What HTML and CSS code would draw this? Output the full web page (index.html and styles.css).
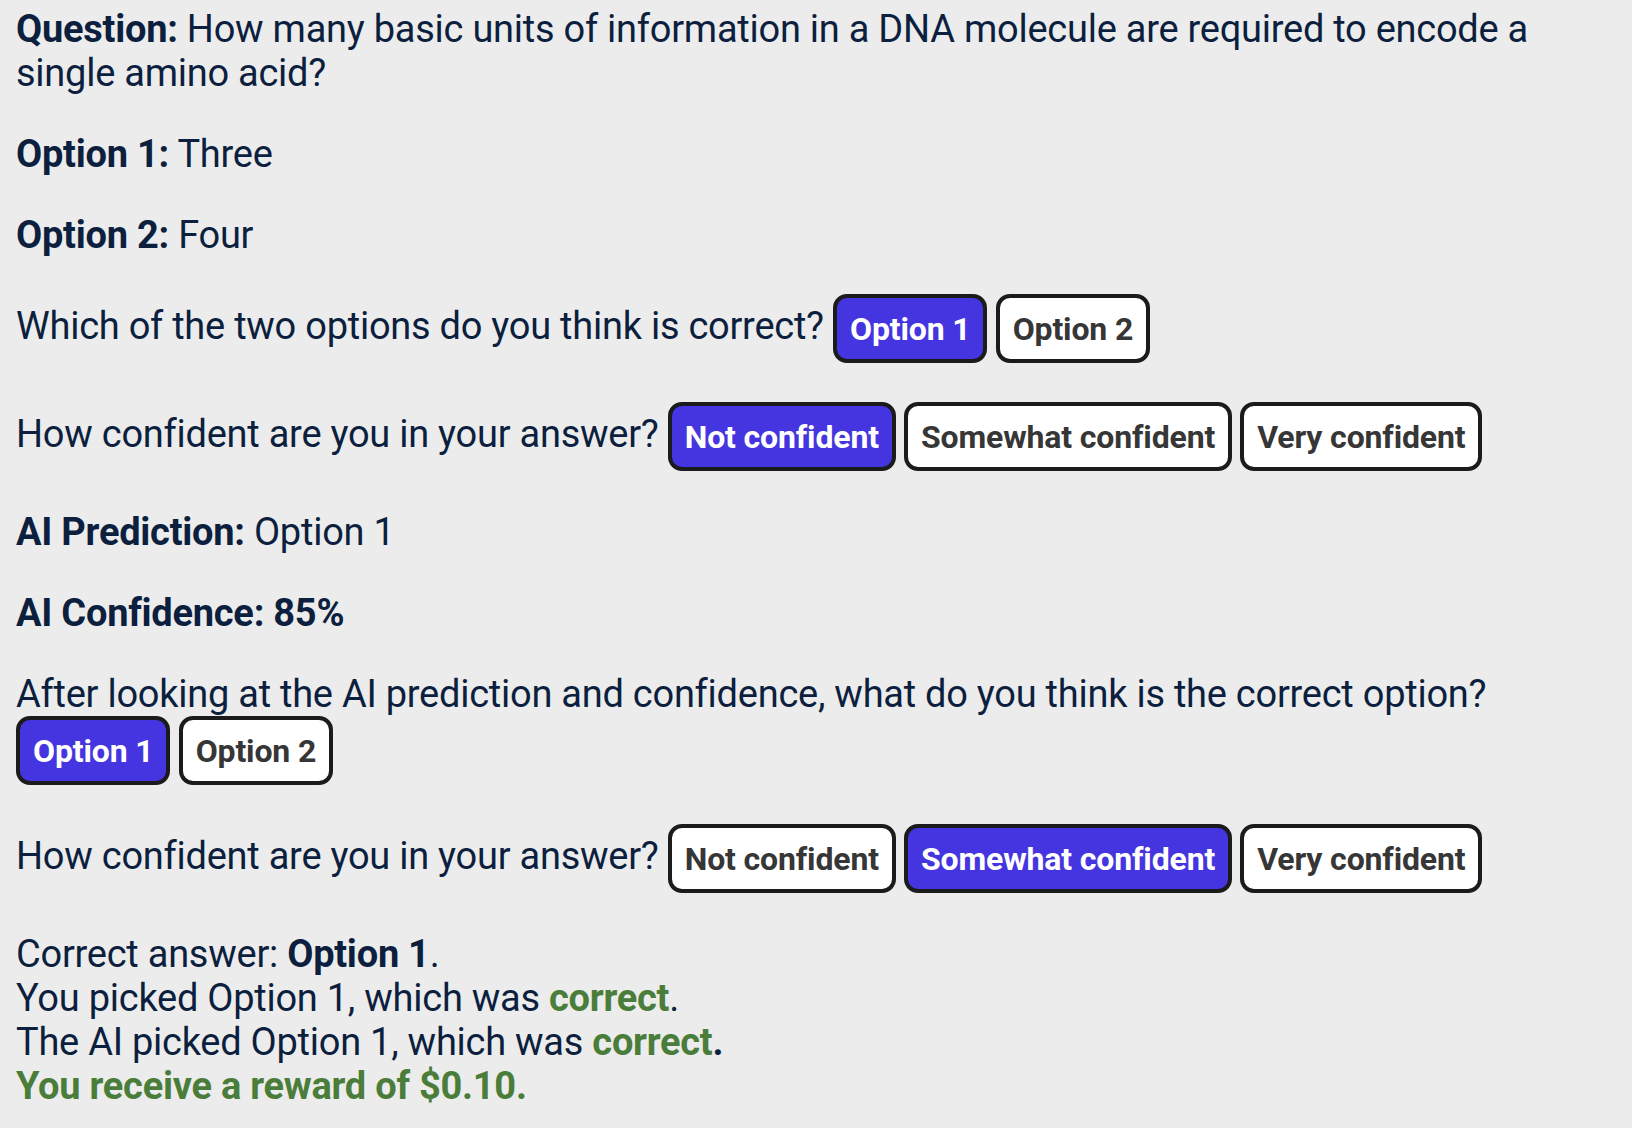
FILE: index.html
```html
<!DOCTYPE html>
<html>
<head>
<meta charset="utf-8">
<link rel="stylesheet" href="styles.css">
</head>
<body>
<div class="page">
  <p class="para"><b>Question:</b> How many basic units of information in a DNA molecule are required to encode a single amino acid?</p>
  <p class="para"><b>Option 1:</b> Three</p>
  <p class="para"><b>Option 2:</b> Four</p>
  <p class="para row">Which of the two options do you think is correct? <span class="btn sel">Option 1</span> <span class="btn">Option 2</span></p>
  <p class="para row">How confident are you in your answer? <span class="btn sel">Not confident</span> <span class="btn">Somewhat confident</span> <span class="btn">Very confident</span></p>
  <p class="para"><b>AI Prediction:</b> Option 1</p>
  <p class="para"><b>AI Confidence: 85%</b></p>
  <p class="para row">After looking at the AI prediction and confidence, what do you think is the correct option? <span class="btn sel">Option 1</span> <span class="btn">Option 2</span></p>
  <p class="para row">How confident are you in your answer? <span class="btn">Not confident</span> <span class="btn sel">Somewhat confident</span> <span class="btn">Very confident</span></p>
  <p class="para">Correct answer: <b>Option 1</b>.<br>
  You picked Option 1, which was <b class="good">correct</b>.<br>
  The AI picked Option 1, which was <b class="good">correct</b><b>.</b><br>
  <b class="good">You receive a reward of $0.10.</b></p>
</div>
</body>
</html>
```
FILE: styles.css
```css
html, body {
  margin: 0;
  padding: 0;
  background: #ececec;
}
.page {
  padding: 7px 16px 0 16px;
  font-family: Roboto, "Liberation Sans", sans-serif;
  font-size: 38px;
  letter-spacing: -0.25px;
  line-height: 44px;
  color: #0c1f3e;
}
.para {
  margin: 0 0 37px 0;
}
.para.row {
  margin-bottom: 39px;
}
b {
  font-weight: 700;
}
.good {
  color: #4a7d3a;
}
.btn {
  display: inline-block;
  vertical-align: middle;
  font-size: 32px;
  letter-spacing: -0.15px;
  font-weight: 700;
  line-height: 40px;
  padding: 11px 13px 10px 13px;
  border: 4px solid #1b1b1b;
  border-radius: 14px;
  background: #ffffff;
  color: #363636;
  margin: 0 -1px 0 0;
}
.btn.sel {
  background: #4535e0;
  color: #ffffff;
}
```
